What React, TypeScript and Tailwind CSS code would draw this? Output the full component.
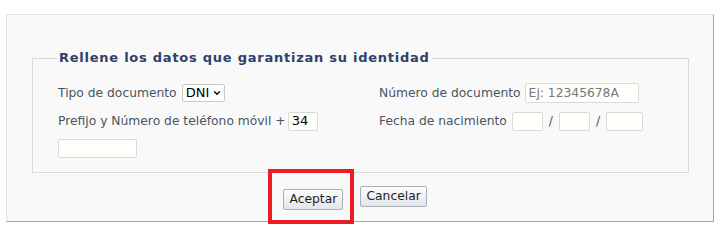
import { ChevronDown } from "lucide-react";

const inputCls =
  "h-[19px] rounded-[2px] border border-[#d9d9d6] bg-[#fffffb] px-[3px] text-[12.3px] text-black outline-none placeholder:text-[#777]";

const btnCls =
  "h-[21px] rounded-[2px] border border-[#a9b1ba] bg-gradient-to-b from-[#fdfdfd] to-[#e2e6eb] px-[6px] text-[12.3px] leading-none text-[#1f1f1f]";

export default function App() {
  return (
    <div className="min-h-[229px] bg-white pl-[6px] pt-[14px] font-['DejaVu_Sans',Verdana,sans-serif]">
      <div className="flex h-[208px] w-[708px] flex-col border border-t-[#e3e3e3] border-l-[#e3e3e3] border-r-[#a2a7a7] border-b-[#a2a7a7] bg-[#f9f9f9]">
        <fieldset className="ml-[25px] mt-[35px] w-[657px] border border-[#d9d9d9] pb-[15px] pl-[25px] pt-[17px]">
          <legend className="-ml-[1px] px-[2px] text-[13px] font-bold leading-[16px] tracking-[0.75px] text-[#2d416b]">
            Rellene los datos que garantizan su identidad
          </legend>

          <div className="flex text-[12.3px] text-[#4a5563]">
            <div className="w-[321px]">
              <div className="flex h-[20px] items-center">
                <span>Tipo de documento</span>
                <span className="relative ml-[5px]">
                  <select className="h-[18px] w-[43px] appearance-none rounded-[2px] border border-[#c9c9c9] bg-white pl-[3px] text-[13px] leading-none text-black outline-none">
                    <option>DNI</option>
                  </select>
                  <ChevronDown
                    className="pointer-events-none absolute right-[3px] top-[4px] h-[10px] w-[10px] text-black"
                    strokeWidth={3}
                  />
                </span>
              </div>
              <div className="mt-[8px] flex h-[20px] items-center">
                <span>Prefijo y Número de teléfono móvil +</span>
                <input className={`${inputCls} ml-[2px] w-[30px] text-[13px]`} defaultValue="34" />
              </div>
              <div className="mt-[8px] flex h-[18px] items-center">
                <input className={`${inputCls} w-[79px]`} />
              </div>
            </div>

            <div className="flex-1">
              <div className="flex h-[20px] items-center">
                <span>Número de documento</span>
                <input
                  className={`${inputCls} ml-[4px] h-[20px] w-[114px]`}
                  placeholder="Ej: 12345678A"
                />
              </div>
              <div className="mt-[8px] flex h-[20px] items-center">
                <span>Fecha de nacimiento</span>
                <input className={`${inputCls} ml-[5px] w-[31px]`} />
                <span className="mx-[6px]">/</span>
                <input className={`${inputCls} w-[31px]`} />
                <span className="mx-[6px]">/</span>
                <input className={`${inputCls} w-[37px]`} />
              </div>
            </div>
          </div>
        </fieldset>

        <div className="mt-[13px] flex justify-center gap-[17px] pr-[11px]">
          <span className="relative">
            <button type="button" className={`${btnCls} w-[60px]`}>
              Aceptar
            </button>
            <span className="pointer-events-none absolute -left-[15px] -top-[17px] h-[55px] w-[86px] border-4 border-[#ed1c24]" />
          </span>
          <button type="button" className={`${btnCls} w-[67px]`}>
            Cancelar
          </button>
        </div>
      </div>
    </div>
  );
}
